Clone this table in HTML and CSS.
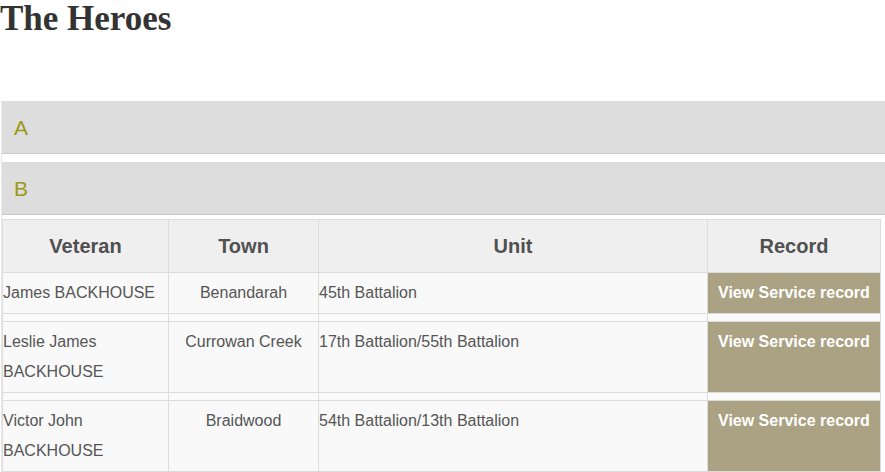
FILE: index.html
```html
<!DOCTYPE html>
<html>
  <head>
    <title>The Heroes</title>
    <meta charset="UTF-8" />
    <meta name="viewport" content="width=device-width, initial-scale=1.0" />
    <link rel="stylesheet" href="styles.css">
  </head>
  <body>
    <h1>The Heroes</h1>

    <div class="letters">
      <div class="letter">A</div>
      <div class="letter">B</div>

      <table class="heroes">
        <colgroup>
          <col class="c-vet" />
          <col class="c-town" />
          <col class="c-unit" />
          <col class="c-rec" />
        </colgroup>
        <thead>
          <tr>
            <th>Veteran</th>
            <th>Town</th>
            <th>Unit</th>
            <th>Record</th>
          </tr>
        </thead>
        <tbody>
          <tr>
            <td>James BACKHOUSE</td>
            <td class="town">Benandarah</td>
            <td>45th Battalion</td>
            <td class="record">View Service record</td>
          </tr>
          <tr class="spacer"><td></td><td></td><td></td><td></td></tr>
          <tr>
            <td>Leslie James BACKHOUSE</td>
            <td class="town">Currowan Creek</td>
            <td>17th Battalion/55th Battalion</td>
            <td class="record">View Service record</td>
          </tr>
          <tr class="spacer"><td></td><td></td><td></td><td></td></tr>
          <tr>
            <td>Victor John BACKHOUSE</td>
            <td class="town">Braidwood</td>
            <td>54th Battalion/13th Battalion</td>
            <td class="record">View Service record</td>
          </tr>
        </tbody>
      </table>
    </div>
  </body>
</html>
```

FILE: styles.css
```css
body {
  margin: 0;
  font-family: "Liberation Sans", Arial, sans-serif;
  color: #555;
}
h1 {
  margin: 0 0 63px 0;
  font-family: "Liberation Serif", "Times New Roman", serif;
  font-size: 35px;
  line-height: 38px;
  font-weight: bold;
  color: #333;
}
.letters {
  margin-left: 1px;
  border-left: 1px solid #e8e8e8;
}
.letter {
  height: 52px;
  line-height: 54px;
  padding-left: 12px;
  background-color: #dddddd;
  border-bottom: 1px solid #c9c9c9;
  font-size: 21px;
  color: #9a9a16;
  margin-bottom: 8px;
}
.letter + .letter {
  margin-bottom: 4px;
}
.heroes {
  border-collapse: collapse;
  width: 879px;
  font-size: 16px;
}
.c-vet { width: 166px; }
.c-town { width: 150px; }
.c-unit { width: 389px; }
.c-rec { width: 173px; }
.heroes th,
.heroes td {
  border: 1px solid #dcdcdc;
}
.heroes th {
  height: 52px;
  background-color: #efefef;
  font-size: 20px;
  font-weight: bold;
  color: #505050;
  text-align: center;
  padding: 0;
}
.heroes td {
  background-color: #f9f9f9;
  line-height: 30px;
  padding: 5px 0 5px 0;
  vertical-align: top;
  text-align: left;
}
.heroes td.town {
  text-align: center;
}
.heroes td.record {
  background-color: #aba283;
  color: white;
  font-weight: bold;
  padding-left: 10px;
}
.heroes tr.spacer td {
  height: 7px;
  padding: 0;
  line-height: 0;
  background-color: #fafafa;
}
```
